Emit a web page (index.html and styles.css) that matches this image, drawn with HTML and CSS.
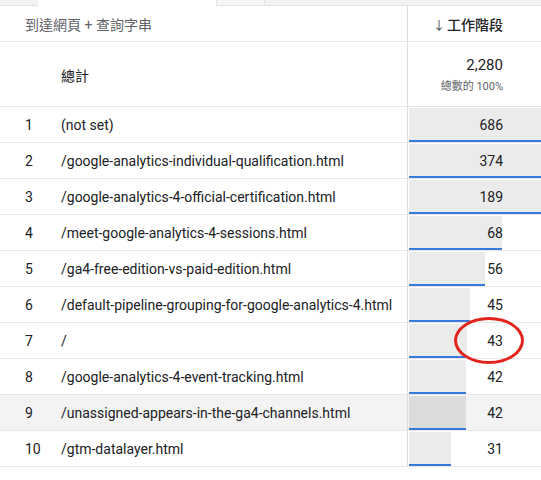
FILE: index.html
```html
<!DOCTYPE html>
<html lang="zh-Hant">
<head>
<meta charset="utf-8">
<link rel="stylesheet" href="styles.css">
</head>
<body>
<div class="page">
  <div class="tabs">
    <div class="tab tab-grey tab-a"></div>
    <div class="tab tab-white tab-b"></div>
    <div class="tab tab-light tab-c"></div>
    <div class="tab tab-grey tab-d"></div>
  </div>
  <div class="table">
    <div class="row head">
      <div class="left"><span class="dim">到達網頁 + 查詢字串</span></div>
      <div class="right"><span class="metric"><span class="arrow">↓</span>工作階段</span></div>
    </div>
    <div class="row total">
      <div class="left"><span class="idx"></span><span class="name">總計</span></div>
      <div class="right totals"><span class="big">2,280</span><span class="pct">總數的 100%</span></div>
    </div>
    <div class="row"><div class="left"><span class="idx">1</span><span class="name">(not set)</span></div><div class="right"><div class="bar" style="width:132px"></div><span class="num">686</span></div></div>
    <div class="row"><div class="left"><span class="idx">2</span><span class="name">/google-analytics-individual-qualification.html</span></div><div class="right"><div class="bar" style="width:132px"></div><span class="num">374</span></div></div>
    <div class="row"><div class="left"><span class="idx">3</span><span class="name">/google-analytics-4-official-certification.html</span></div><div class="right"><div class="bar" style="width:132px"></div><span class="num">189</span></div></div>
    <div class="row"><div class="left"><span class="idx">4</span><span class="name">/meet-google-analytics-4-sessions.html</span></div><div class="right"><div class="bar" style="width:93px"></div><span class="num">68</span></div></div>
    <div class="row"><div class="left"><span class="idx">5</span><span class="name">/ga4-free-edition-vs-paid-edition.html</span></div><div class="right"><div class="bar" style="width:76px"></div><span class="num">56</span></div></div>
    <div class="row"><div class="left"><span class="idx">6</span><span class="name">/default-pipeline-grouping-for-google-analytics-4.html</span></div><div class="right"><div class="bar" style="width:61px"></div><span class="num">45</span></div></div>
    <div class="row"><div class="left"><span class="idx">7</span><span class="name">/</span></div><div class="right"><div class="bar" style="width:58px"></div><span class="num">43</span></div></div>
    <div class="row"><div class="left"><span class="idx">8</span><span class="name">/google-analytics-4-event-tracking.html</span></div><div class="right"><div class="bar" style="width:57px"></div><span class="num">42</span></div></div>
    <div class="row hover"><div class="left"><span class="idx">9</span><span class="name">/unassigned-appears-in-the-ga4-channels.html</span></div><div class="right"><div class="bar" style="width:57px"></div><span class="num">42</span></div></div>
    <div class="row"><div class="left"><span class="idx">10</span><span class="name">/gtm-datalayer.html</span></div><div class="right"><div class="bar" style="width:42px"></div><span class="num">31</span></div></div>
  </div>
  <div class="circle"></div>
</div>
</body>
</html>
```
FILE: styles.css
```css
html, body {
  margin: 0;
  padding: 0;
  background: #fff;
}
body {
  font-family: Roboto, "Noto Sans CJK TC", sans-serif;
  font-size: 14px;
  color: #202124;
}
.page {
  position: relative;
  width: 541px;
  height: 480px;
  overflow: hidden;
}
.tabs {
  display: flex;
  height: 6px;
}
.tab-a { width: 38px; background: #f1f3f4; border-bottom: 1px solid #e3e3e3; box-sizing: border-box; }
.tab-b { width: 178px; background: #fff; }
.tab-c { width: 49px; background: #f6f6f6; border: 1px solid #e3e3e3; border-top: 0; box-sizing: border-box; }
.tab-d { flex: 1; background: #f1f3f4; border-bottom: 1px solid #e3e3e3; box-sizing: border-box; }
.table {
  display: flex;
  flex-direction: column;
}
.row {
  display: flex;
  height: 36px;
  border-bottom: 1px solid #e6e6e6;
  box-sizing: border-box;
}
.row.hover { background: #f3f3f3; }
.left {
  width: 408px;
  box-sizing: border-box;
  border-right: 1px solid #dadce0;
  display: flex;
  align-items: center;
  padding-left: 25px;
  padding-top: 1px;
}
.idx { width: 36px; flex: none; }
.name { white-space: nowrap; }
.right {
  flex: 1;
  display: grid;
  padding: 1px 0 0 1px;
}
.bar, .num { grid-area: 1 / 1; }
.bar {
  background: #ebebeb;
  border-bottom: 2px solid #3b78db;
  box-sizing: border-box;
}
.row.hover .bar { background: #dcdcdc; }
.num {
  align-self: center;
  justify-self: end;
  padding-right: 38px;
}
.head { height: 36px; }
.head .left { padding-left: 25px; }
.dim { color: #5f6368; }
.head .right {
  display: flex;
  align-items: center;
  justify-content: flex-end;
  padding-right: 38px;
  padding-left: 0;
}
.metric { color: #202124; font-weight: 500; }
.arrow { font-size: 12px; margin-right: 2px; color: #3c4043; font-weight: 400; }
.total { height: 65px; }
.totals {
  display: flex;
  flex-direction: column;
  align-items: flex-end;
  justify-content: center;
  padding-right: 38px;
  padding-left: 0;
  padding-top: 0;
  gap: 3px;
}
.big { font-size: 15px; font-weight: 400; }
.pct { font-size: 11px; color: #5f6368; }
.circle {
  position: absolute;
  left: 454px;
  top: 317px;
  width: 70px;
  height: 47px;
  box-sizing: border-box;
  border: 3px solid #e3241c;
  border-radius: 50%;
}
```
